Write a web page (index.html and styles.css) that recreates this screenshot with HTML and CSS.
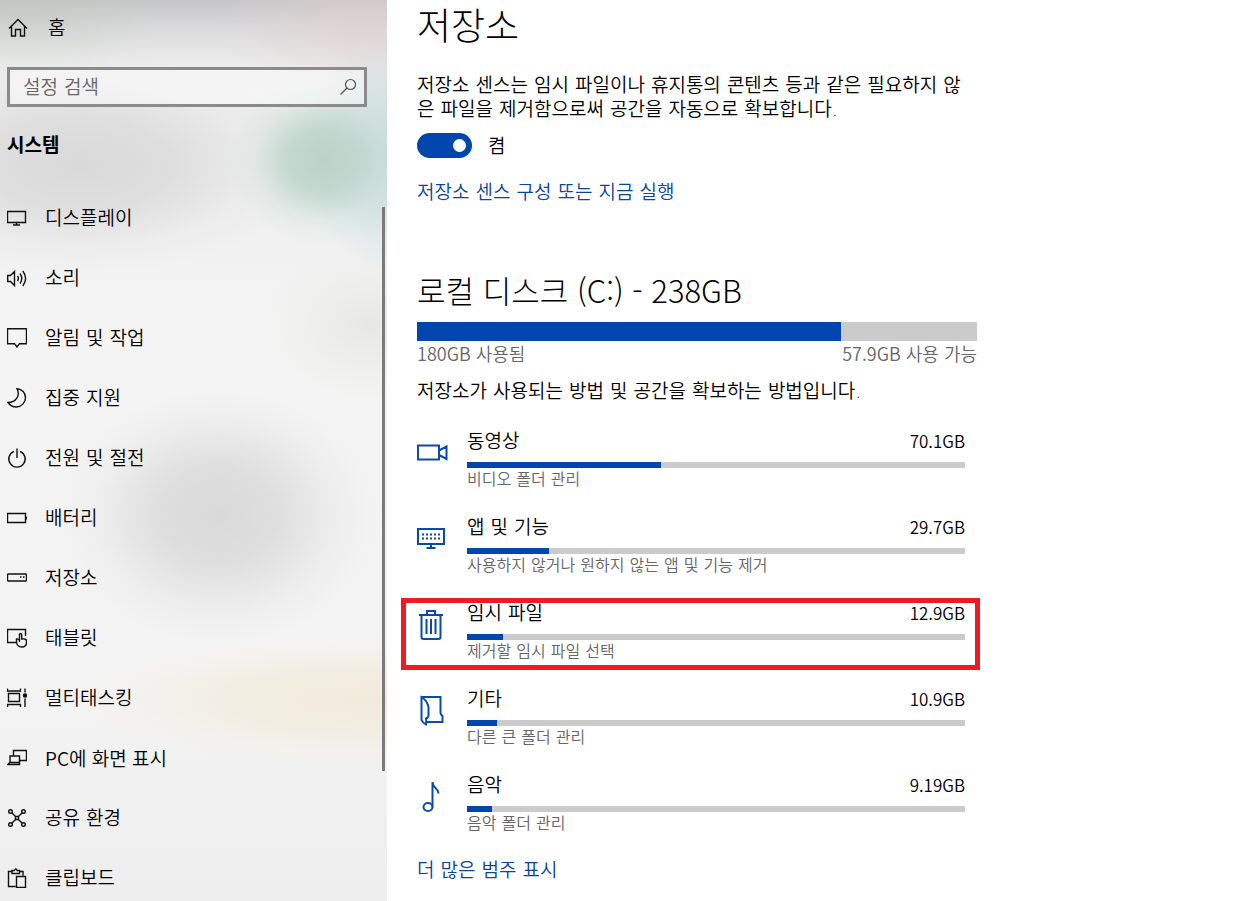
FILE: index.html
```html
<!DOCTYPE html>
<html lang="ko">
<head>
  <meta charset="UTF-8" />
  <meta name="viewport" content="width=device-width, initial-scale=1.0"/>
  <title>설정 - 저장소</title>
  <link rel="stylesheet" href="styles.css">
</head>
<body>
  <div class="settings">
    <!-- 왼쪽 메뉴 -->
    <aside class="sidebar">
      <a class="home" href="#">
        <svg class="icon" viewBox="0 0 20 20"><path d="M1 10.500 10 1.500l9 9M3.500 8.500V18h4v-6.500h5V18h4V8.500"/></svg>
        <span>홈</span>
      </a>

      <div class="search">
        <input type="text" id="search" placeholder="설정 검색" aria-label="설정 검색">
        <svg class="icon search-icon" viewBox="0 0 20 20"><circle cx="12.500" cy="7.500" r="5"/><path d="M9 11 2.500 17.500"/></svg>
      </div>

      <h2 class="group-title">시스템</h2>

      <nav class="menu">
        <a href="#"><svg class="icon" viewBox="0 0 20 20"><path d="M.5 3.500h18v11H.5zM9.500 14.500v2.500M6 17h7"/></svg><span>디스플레이</span></a>
        <a href="#"><svg class="icon" viewBox="0 0 20 20"><path d="M.7 7.500v6h2.800l4 4v-14l-4 4zM10.500 8q1.800 2.500 0 5M13 5.500q3.600 5 0 10M15.800 3q5.600 7.500 0 15"/></svg><span>소리</span></a>
        <a href="#"><svg class="icon" viewBox="0 0 20 20"><path d="M.5 .7h19v15h-7L10 19l-2.500-3.300h-7z"/></svg><span>알림 및 작업</span></a>
        <a href="#"><svg class="icon" viewBox="0 0 20 20"><path d="M10 .7c5 .5 8.500 4 8.500 8.800 0 5-4 9.500-9 9.500-3.500 0-6.500-1.500-8.500-4.500C9 14.500 13.500 7.500 10 .7z"/></svg><span>집중 지원</span></a>
        <a href="#"><svg class="icon" viewBox="0 0 20 20"><path d="M10 .5v9.500M7 3.300a8.200 8.200 0 1 0 6 0"/></svg><span>전원 및 절전</span></a>
        <a href="#"><svg class="icon" viewBox="0 0 20 20"><path d="M.5 5.500h18v9H.5zM19.500 8.500v3"/></svg><span>배터리</span></a>
        <a href="#"><svg class="icon" viewBox="0 0 20 20"><rect x=".5" y="6" width="19" height="7" rx="1"/><path d="M13 9h1.500M16 9h1.500"/></svg><span>저장소</span></a>
        <a href="#"><svg class="icon" viewBox="0 0 20 20"><path d="M9 14.500H.5V1.500h18V8M12.500 14V6.500q1-2 2.200 0V11q4.800-.5 4.800 2v1c0 3-2 5-4.700 5-3.300 0-5.300-2.500-5.300-5.500V11q1.500-.5 3 1.500"/></svg><span>태블릿</span></a>
        <a href="#"><svg class="icon" viewBox="0 0 20 20"><path d="M1.500 5.500h11v8h-11zM.5 .5v2.500h13V.5M.5 19v-2.500h13V19M18 .5v4M18 10.500V19"/><circle class="dot" cx="18" cy="7.500" r="1.500"/></svg><span>멀티태스킹</span></a>
        <a class="latin" href="#"><svg class="icon" viewBox="0 0 20 20"><path d="M6.500 7.500v-5h13v10h-7M3 8h9.500v6.500H3zM.7 16.500 3 14.500h9.500v2H.7z"/></svg><span>PC에 화면 표시</span></a>
        <a href="#"><svg class="icon" viewBox="0 0 20 20"><circle cx="3.500" cy="3.500" r="1.800"/><circle cx="16.500" cy="3.500" r="1.800"/><circle cx="3.500" cy="16.500" r="1.800"/><circle cx="16.500" cy="16.500" r="1.800"/><path d="M8.500 8.500h3v3h-3zM4.800 4.800l3.700 3.700M15.200 4.800l-3.700 3.700M4.800 15.200l3.700-3.700M15.200 15.200l-3.700-3.700"/></svg><span>공유 환경</span></a>
        <a href="#"><svg class="icon" viewBox="0 0 20 20"><path d="M8.500 18.500h-7v-15h3.500M12.500 3.500H16v4M5 5.500v-3h2.500q1.300-3 2.600 0h2.400v3zM9.500 8.500h9v11h-9z"/></svg><span>클립보드</span></a>
        <div class="scrollbar"></div>
      </nav>
    </aside>

    <!-- 저장소 내용 -->
    <main class="content">
      <h1>저장소</h1>
      <p class="intro">저장소 센스는 임시 파일이나 휴지통의 콘텐츠 등과 같은 필요하지 않은 파일을 제거함으로써 공간을 자동으로 확보합니다.</p>

      <div class="toggle-row">
        <input type="checkbox" id="sense" class="toggle" checked>
        <label for="sense">켬</label>
      </div>
      <a class="link sense-link" href="#">저장소 센스 구성 또는 지금 실행</a>

      <h2 class="disk-title">로컬 디스크 (C:) - 238GB</h2>
      <div class="bar disk-bar"><div class="fill" style="width: 75.7%"></div></div>
      <div class="disk-labels">
        <span>180GB 사용됨</span>
        <span>57.9GB 사용 가능</span>
      </div>
      <p class="usage-note">저장소가 사용되는 방법 및 공간을 확보하는 방법입니다.</p>

      <ul class="categories">
        <li class="category">
          <svg class="cat-icon" viewBox="0 0 32 32"><path d="M1 9.500h21v14H1zM22 14.500l7.500-4v12.500L22 19z"/></svg>
          <div class="cat-body">
            <div class="cat-head"><span>동영상</span><span class="size">70.1GB</span></div>
            <div class="bar"><div class="fill" style="width: 39%"></div></div>
            <div class="cat-note">비디오 폴더 관리</div>
          </div>
        </li>
        <li class="category">
          <svg class="cat-icon" viewBox="0 0 32 32"><path d="M1 7h26v15H1zM14 22v4M9.500 26h9"/><path class="dots" d="M5 12.500h18M5 16.500h18"/></svg>
          <div class="cat-body">
            <div class="cat-head"><span>앱 및 기능</span><span class="size">29.7GB</span></div>
            <div class="bar"><div class="fill" style="width: 16.5%"></div></div>
            <div class="cat-note">사용하지 않거나 원하지 않는 앱 및 기능 제거</div>
          </div>
        </li>
        <li class="category marked">
          <svg class="cat-icon" viewBox="0 0 32 32"><path d="M2 7h24M4.500 7v22q0 2 2 2h15q2 0 2-2V7M10 7V3h8v4M9.500 11v15M14 11v15M18.500 11v15"/></svg>
          <div class="cat-body">
            <div class="cat-head"><span>임시 파일</span><span class="size">12.9GB</span></div>
            <div class="bar"><div class="fill" style="width: 7.2%"></div></div>
            <div class="cat-note">제거할 임시 파일 선택</div>
          </div>
        </li>
        <li class="category">
          <svg class="cat-icon" viewBox="0 0 32 32"><path d="M4.500 3v23q1 2.500 4.500 4.500.5-3 0-6 2.500-1 2.500-3v-8.500Q10 6.500 4.500 3zM4.500 3h19v16q0 1.500 2 3v6H9.500"/></svg>
          <div class="cat-body">
            <div class="cat-head"><span>기타</span><span class="size">10.9GB</span></div>
            <div class="bar"><div class="fill" style="width: 6%"></div></div>
            <div class="cat-note">다른 큰 폴더 관리</div>
          </div>
        </li>
        <li class="category">
          <svg class="cat-icon" viewBox="0 0 32 32"><ellipse cx="11" cy="27" rx="4.500" ry="4"/><path d="M15.500 27V2q.5 4 3 6 3 2.500 3 5.500"/></svg>
          <div class="cat-body">
            <div class="cat-head"><span>음악</span><span class="size">9.19GB</span></div>
            <div class="bar"><div class="fill" style="width: 5%"></div></div>
            <div class="cat-note">음악 폴더 관리</div>
          </div>
        </li>
      </ul>

      <a class="link more-link" href="#">더 많은 범주 표시</a>
    </main>
  </div>
</body>
</html>
```
FILE: styles.css
```css
* {
  box-sizing: border-box;
}

body {
  margin: 0;
  font-family: "DejaVu Sans", "Noto Sans CJK KR", sans-serif;
  font-size: 19px;
  font-weight: 350;
  line-height: 26px;
  color: #000;
  background: #fff;
}

h1, h2, p, ul {
  margin: 0;
  padding: 0;
}

h1, h2 {
  font-weight: 300;
}

a {
  color: inherit;
  text-decoration: none;
}

.settings {
  display: flex;
  height: 100vh;
  overflow: hidden;
}

/* 왼쪽 메뉴 */
.sidebar {
  flex: 0 0 387px;
  overflow: hidden;
  background:
    radial-gradient(ellipse 95px 85px at 322px 160px, rgba(186, 210, 200, 0.95), rgba(188, 212, 202, 0.85) 35%, rgba(200, 220, 210, 0.3) 70%, transparent),
    radial-gradient(ellipse 100px 120px at 400px 155px, rgba(196, 218, 220, 0.9), rgba(196, 218, 220, 0.6) 45%, transparent),
    radial-gradient(ellipse 150px 70px at 370px 25px, rgba(226, 206, 206, 0.6), transparent),
    radial-gradient(ellipse 150px 70px at 20px 5px, rgba(190, 200, 186, 0.5), transparent),
    radial-gradient(ellipse 230px 110px at 80px 165px, rgba(217, 216, 217, 0.95), rgba(218, 217, 218, 0.75) 40%, rgba(226, 225, 226, 0.25) 75%, transparent),
    radial-gradient(ellipse 160px 130px at 218px 515px, rgba(218, 217, 218, 1), rgba(219, 218, 219, 0.85) 35%, rgba(224, 223, 224, 0.25) 75%, transparent),
    radial-gradient(ellipse 110px 80px at 370px 325px, rgba(228, 228, 224, 0.8), rgba(230, 230, 226, 0.3) 60%, transparent),
    radial-gradient(ellipse 300px 65px at 370px 700px, rgba(241, 235, 220, 1), rgba(242, 236, 222, 0.8) 45%, rgba(243, 239, 230, 0.25) 80%, transparent),
    linear-gradient(#c6c6c8, #dadadc 28px, #ececec 65px, #efeff0 200px, #f4f4f4 320px, #f3f3f3 700px, #eeeeee);
}

.icon {
  flex: none;
  width: 20px;
  height: 20px;
  fill: none;
  stroke: #111;
  stroke-width: 1.4;
}

.icon .dot {
  fill: #111;
}

.home,
.menu a {
  display: flex;
  align-items: center;
  gap: 18px;
  padding-left: 7px;
}

.home {
  height: 56px;
  padding-left: 8px;
}

.home span {
  padding-left: 2px;
}

.search {
  display: flex;
  align-items: center;
  height: 40px;
  margin: 11px 20px 0 7px;
  padding: 0 6px 0 13px;
  border: 3px solid #8b8b8b;
  background: rgba(255, 255, 255, 0.45);
}

.search input {
  flex: 1;
  min-width: 0;
  padding: 0;
  border: none;
  outline: none;
  background: none;
  font: inherit;
}

.search input::placeholder {
  color: #666;
}

.search-icon {
  stroke: #555;
  stroke-width: 1.2;
}

.group-title {
  margin: 25px 0 30px 7px;
  font-size: 19px;
  font-weight: 700;
}

.menu {
  position: relative;
}

.menu a {
  height: 60px;
}

.latin,
.disk-title,
.disk-labels,
.size {
  font-family: "Noto Sans CJK KR", sans-serif;
}

.scrollbar {
  position: absolute;
  top: 19px;
  right: 2px;
  width: 3px;
  height: 564px;
  background: #7a7a7a;
}

/* 저장소 내용 */
.content {
  flex: 1;
  max-width: 590px;
  padding: 2px 0 20px 30px;
}

h1 {
  font-size: 37px;
  line-height: 52px;
}

.intro {
  margin-top: 19px;
  margin-right: 10px;
  line-height: 24px;
  word-break: break-all;
}

.toggle-row {
  display: flex;
  align-items: center;
  gap: 16px;
  height: 25px;
  margin-top: 12px;
}

.toggle {
  display: flex;
  align-items: center;
  appearance: none;
  width: 55px;
  height: 25px;
  margin: 0;
  padding: 0 6px;
  border-radius: 13px;
  background: #999;
}

.toggle::before {
  content: "";
  width: 13px;
  height: 13px;
  border-radius: 50%;
  background: #fff;
}

.toggle:checked {
  justify-content: flex-end;
  background: #0046ad;
}

.link {
  display: block;
  color: #0a449c;
}

.sense-link {
  margin-top: 21px;
}

.disk-title {
  margin-top: 64px;
  font-size: 31px;
  line-height: 42px;
}

.bar {
  height: 6px;
  background: #cbcbcb;
}

.fill {
  height: 100%;
  background: #0046ad;
}

.disk-bar {
  height: 19px;
  margin-top: 11px;
}

.disk-labels {
  display: flex;
  justify-content: space-between;
  font-size: 18px;
  line-height: 24px;
  color: #666;
}

.usage-note {
  margin-top: 13px;
}

.categories {
  display: grid;
  gap: 22px;
  margin: 24px 12px 0 0;
  list-style: none;
}

.category {
  position: relative;
  display: flex;
  gap: 18px;
}

.cat-icon {
  flex: none;
  width: 32px;
  height: 32px;
  margin-top: 8px;
  fill: none;
  stroke: #0a4aa8;
  stroke-width: 2;
}

.cat-icon .dots {
  stroke-dasharray: 2 2;
}

.cat-body {
  flex: 1;
}

.cat-head {
  display: flex;
  justify-content: space-between;
  margin-bottom: 8px;
}

.size {
  font-size: 17px;
}

.cat-note {
  font-size: 16px;
  line-height: 24px;
  color: #666;
}

/* 강조 표시 */
.marked::after {
  content: "";
  position: absolute;
  inset: -2px -15px -6px -16px;
  border: 5px solid #ed1c24;
}

.more-link {
  margin-top: 21px;
}
```
